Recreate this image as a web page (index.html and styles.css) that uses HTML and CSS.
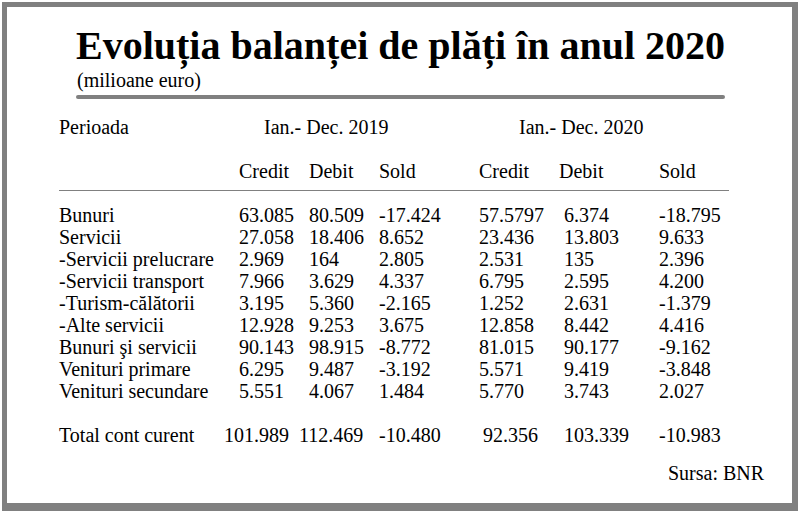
FILE: index.html
```html
<!DOCTYPE html>
<html lang="ro">
<head>
<meta charset="utf-8">
<title>Evoluția balanței de plăți în anul 2020</title>
<link rel="stylesheet" href="styles.css">
</head>
<body>
<div class="frame">
  <header class="head">
    <h1 class="title">Evoluția balanței de plăți în anul 2020</h1>
    <p class="subtitle">(milioane euro)</p>
    <div class="bar"></div>
  </header>

  <div class="table">
    <div class="row">
      <span class="lbl">Perioada</span>
      <span class="period p19">Ian.- Dec. 2019</span>
      <span class="period p20">Ian.- Dec. 2020</span>
    </div>
    <div class="row cols">
      <span class="lbl"></span>
      <span>Credit</span><span>Debit</span><span>Sold</span>
      <span>Credit</span><span class="hdeb">Debit</span><span>Sold</span>
    </div>
    <div class="rule"></div>
    <div class="row first">
      <span class="lbl">Bunuri</span>
      <span>63.085</span><span>80.509</span><span>-17.424</span>
      <span>57.5797</span><span>6.374</span><span>-18.795</span>
    </div>
    <div class="row">
      <span class="lbl">Servicii</span>
      <span>27.058</span><span>18.406</span><span>8.652</span>
      <span>23.436</span><span>13.803</span><span>9.633</span>
    </div>
    <div class="row">
      <span class="lbl">-Servicii prelucrare</span>
      <span>2.969</span><span>164</span><span>2.805</span>
      <span>2.531</span><span>135</span><span>2.396</span>
    </div>
    <div class="row">
      <span class="lbl">-Servicii transport</span>
      <span>7.966</span><span>3.629</span><span>4.337</span>
      <span>6.795</span><span>2.595</span><span>4.200</span>
    </div>
    <div class="row">
      <span class="lbl">-Turism-călătorii</span>
      <span>3.195</span><span>5.360</span><span>-2.165</span>
      <span>1.252</span><span>2.631</span><span>-1.379</span>
    </div>
    <div class="row">
      <span class="lbl">-Alte servicii</span>
      <span>12.928</span><span>9.253</span><span>3.675</span>
      <span>12.858</span><span>8.442</span><span>4.416</span>
    </div>
    <div class="row">
      <span class="lbl">Bunuri şi servicii</span>
      <span>90.143</span><span>98.915</span><span>-8.772</span>
      <span>81.015</span><span>90.177</span><span>-9.162</span>
    </div>
    <div class="row">
      <span class="lbl">Venituri primare</span>
      <span>6.295</span><span>9.487</span><span>-3.192</span>
      <span>5.571</span><span>9.419</span><span>-3.848</span>
    </div>
    <div class="row">
      <span class="lbl">Venituri secundare</span>
      <span>5.551</span><span>4.067</span><span>1.484</span>
      <span>5.770</span><span>3.743</span><span>2.027</span>
    </div>
    <div class="row total">
      <span class="lbl">Total cont curent</span>
      <span class="t1">101.989</span><span class="t2">112.469</span><span>-10.480</span>
      <span class="t4">92.356</span><span>103.339</span><span>-10.983</span>
    </div>
  </div>

  <p class="source">Sursa: BNR</p>
</div>
</body>
</html>
```

FILE: styles.css
```css
* {
  box-sizing: border-box;
}

html, body {
  margin: 0;
  padding: 0;
  background: #ffffff;
}

body {
  font-family: "Liberation Serif", "Times New Roman", serif;
  color: #000000;
}

.frame {
  margin: 2px 0 0 2px;
  width: 796px;
  height: 509px;
  border-style: solid;
  border-color: #808080;
  border-width: 5px 6px 8px 5px;
  background: #ffffff;
  overflow: hidden;
}

.head {
  margin: 19px 0 0 69px;
}

.title {
  margin: 0;
  font-size: 40px;
  line-height: 40px;
  font-weight: bold;
  white-space: nowrap;
}

.subtitle {
  margin: 4px 0 0 1px;
  font-size: 20px;
  line-height: 20px;
}

.bar {
  margin-top: 5px;
  width: 649px;
  height: 4px;
  background: #808080;
  border-radius: 2px;
}

.table {
  margin: 17px 0 0 52px;
  width: 670px;
  font-size: 20px;
  line-height: 22px;
}

.row {
  display: grid;
  grid-template-columns: 180px 70px 70px 100px 85px 95px 70px;
  white-space: nowrap;
}

.row.cols {
  margin-top: 22px;
}

.period {
  grid-column: span 3;
}

.p19 {
  padding-left: 25px;
}

.p20 {
  padding-left: 40px;
}

.hdeb {
  margin-left: -5px;
}

.rule {
  margin-top: 8px;
  height: 1px;
  background: #808080;
}

.row.first {
  margin-top: 13px;
}

.row.total {
  margin-top: 22px;
}

.t1 {
  margin-left: -15px;
}

.t2 {
  margin-left: -10px;
}

.t4 {
  margin-left: 4px;
}

.source {
  margin: 16px 0 0 661px;
  font-size: 20px;
  line-height: 22px;
}
```
